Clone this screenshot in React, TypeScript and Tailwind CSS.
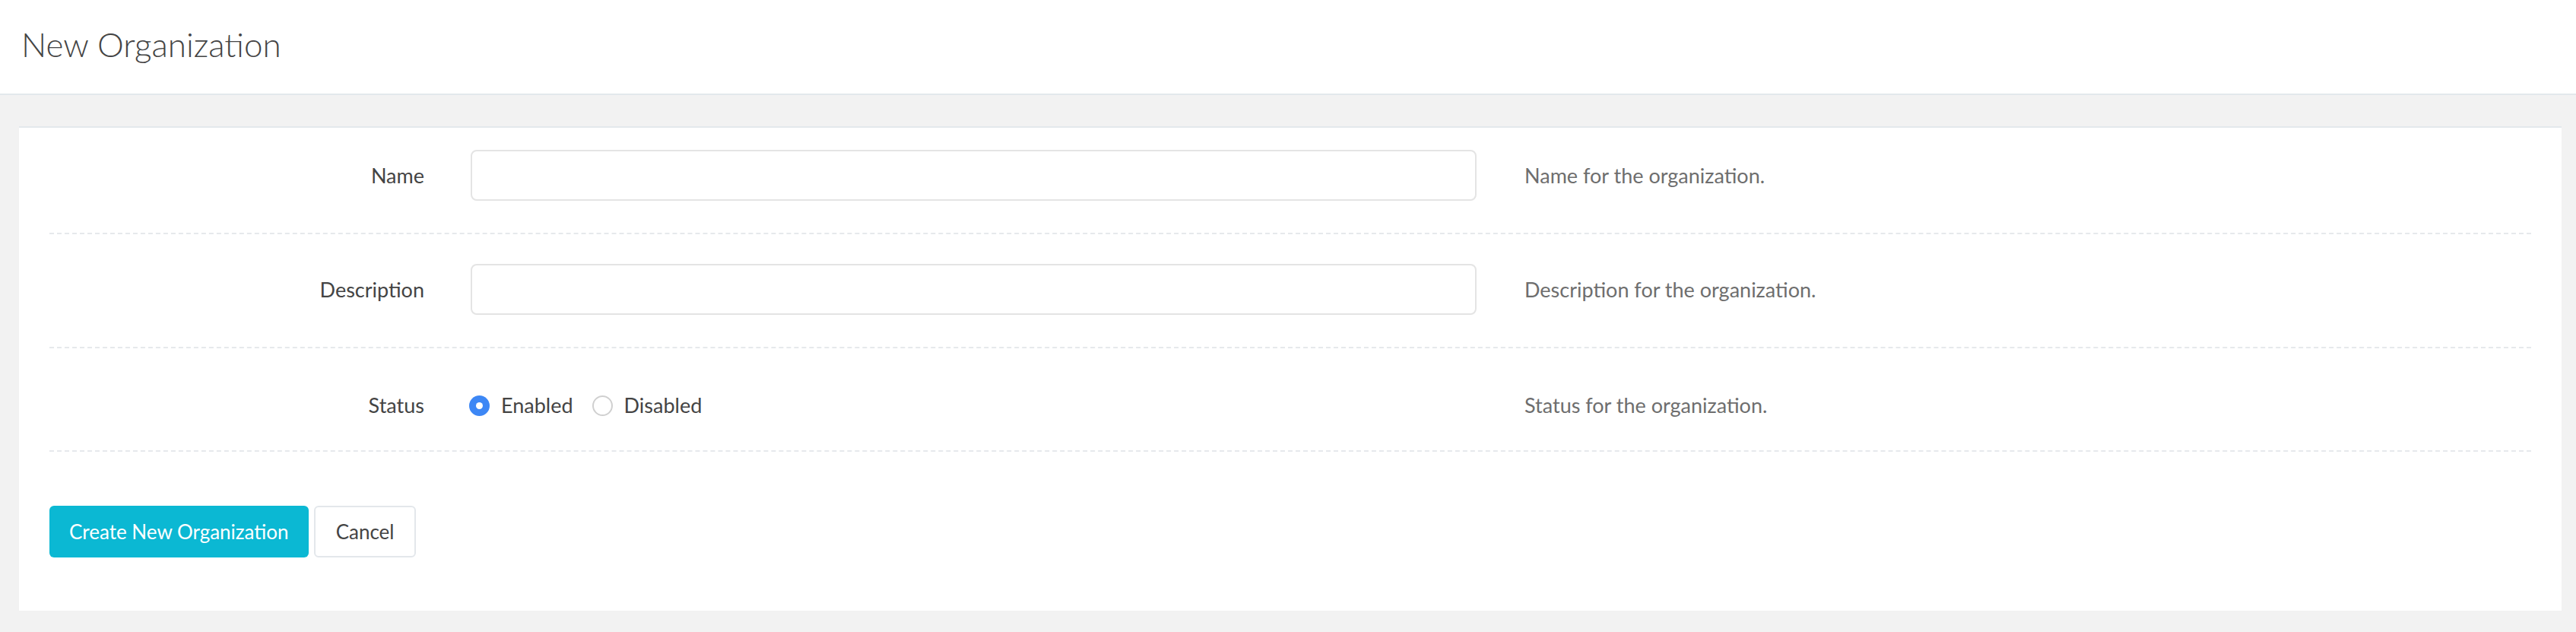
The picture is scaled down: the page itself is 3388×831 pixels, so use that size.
import React from 'react'

const rows = [
  { label: 'Name', help: 'Name for the organization.' },
  { label: 'Description', help: 'Description for the organization.' },
]

function Radio({ checked, label }: { checked?: boolean; label: string }) {
  return (
    <label className="flex items-center gap-[15px]">
      {checked ? (
        <span className="w-[27px] h-[27px] rounded-full bg-[#3d87f5] flex items-center justify-center">
          <span className="w-[9px] h-[9px] rounded-full bg-white" />
        </span>
      ) : (
        <span className="w-[27px] h-[27px] rounded-full border-2 border-[#d0d0d0] bg-white" />
      )}
      <span>{label}</span>
    </label>
  )
}

export default function App() {
  return (
    <div className="min-h-[831px] bg-[#f2f2f2] font-['Lato',sans-serif] text-[27px] leading-[40px] text-[#444]">
      {/* header */}
      <header className="h-[125px] bg-white border-b-2 border-[#e3e8ec] flex items-center pl-[28px] pb-[8px]">
        <h1 className="text-[44px] font-light text-[#444] leading-none">New Organization</h1>
      </header>

      {/* form card */}
      <div className="mt-[41px] ml-[25px] mr-[19px] bg-white border-t-2 border-[#e3e8ec] px-[40px] pb-[70px]">
        {rows.map((r, i) => (
          <div
            key={r.label}
            className={`flex items-center border-b-2 border-dashed border-[#e6e9ec] pb-[42px] ${i === 0 ? 'pt-[29px]' : 'pt-[39px]'}`}
          >
            <div className="w-[493px] text-right">{r.label}</div>
            <input
              type="text"
              className="ml-[61px] w-[1323px] h-[67px] rounded-[8px] border-2 border-[#e4e4e4] bg-white px-4 outline-none"
            />
            <div className="ml-[63px] text-[#6e6e6e]">{r.help}</div>
          </div>
        ))}

        <div className="flex items-center border-b-2 border-dashed border-[#e6e9ec] pt-[55px] pb-[39px]">
          <div className="w-[493px] text-right">Status</div>
          <div className="ml-[59px] w-[1325px] flex items-center gap-[25px]">
            <Radio checked label="Enabled" />
            <Radio label="Disabled" />
          </div>
          <div className="ml-[63px] text-[#6e6e6e]">Status for the organization.</div>
        </div>

        <div className="flex items-center gap-[7px] pt-[71px] text-[26px]">
          <button className="h-[68px] px-[26px] rounded-[6px] bg-[#0bb8d3] text-white">
            Create New Organization
          </button>
          <button className="h-[68px] px-[27px] rounded-[6px] border-2 border-[#e3e7eb] bg-white text-[#444]">
            Cancel
          </button>
        </div>
      </div>
    </div>
  )
}
